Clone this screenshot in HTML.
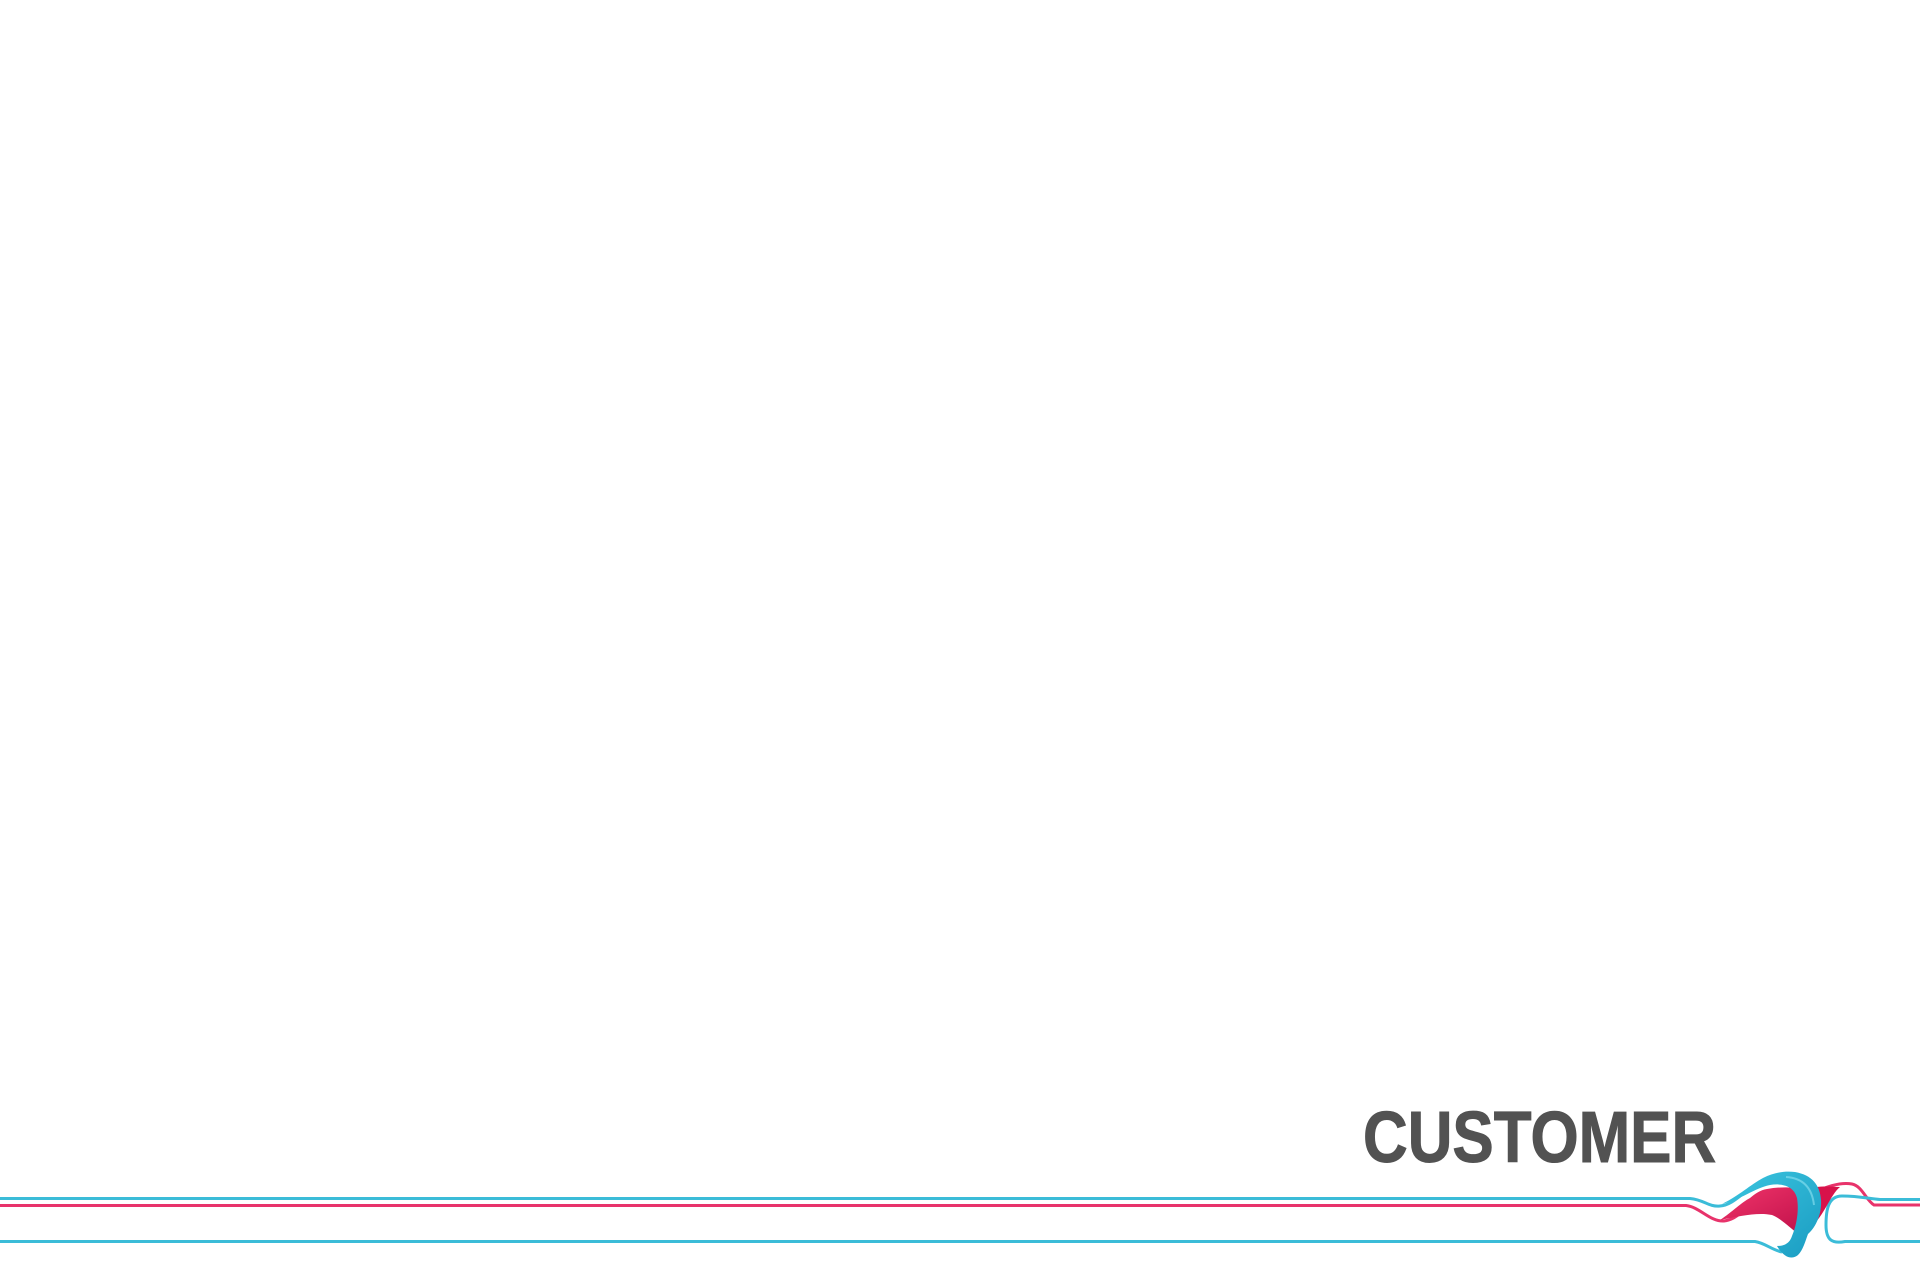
<!DOCTYPE html>
<html><head><meta charset="utf-8"><style>
html,body{margin:0;padding:0;background:#fff;width:1920px;height:1280px;overflow:hidden;position:relative}
.t{position:absolute;left:1363px;top:1098px;font-family:"Liberation Sans",sans-serif;font-weight:bold;font-size:72px;line-height:80px;color:#525252;transform:scaleX(0.86);transform-origin:0 0;white-space:nowrap;-webkit-text-stroke:1px #525252}
svg{position:absolute;left:0;top:0}
</style></head><body>
<div class="t">CUSTOMER</div>
<svg width="1920" height="1280" viewBox="0 0 1920 1280">
<defs>
<linearGradient id="cy" x1="0" y1="0" x2="1" y2="1"><stop offset="0" stop-color="#3cc6e0"/><stop offset="1" stop-color="#1a9cc2"/></linearGradient>
<linearGradient id="pk" x1="0" y1="0" x2="1" y2="1"><stop offset="0" stop-color="#f0356a"/><stop offset="1" stop-color="#c0104a"/></linearGradient>
</defs>
<g fill="none" stroke-width="3">
<path d="M0 1198.5 H1690 C1705 1200 1708 1207 1720 1206 C1735 1205 1745 1188 1765 1180" stroke="#3bbcd8"/>
<path d="M0 1205.5 H1686 C1700 1207 1710 1222 1724 1221 C1735 1220 1740 1212 1752 1206" stroke="#e8336b"/>
<path d="M0 1241.5 H1755 C1765 1243 1772 1250 1782 1252" stroke="#3bbcd8"/>
<path d="M1815 1192 C1828 1186 1842 1182 1852 1184 C1862 1186 1866 1200 1874 1205 H1920" stroke="#e8336b"/>
<path d="M1920 1199.5 H1880 C1870 1199 1860 1196 1842 1196 C1828 1196 1826 1210 1826 1225 C1826 1240 1832 1244 1845 1241.5 H1920" stroke="#3bbcd8"/>
</g>
<path d="M1720 1220 C1732 1212 1742 1202 1750 1198 C1755 1194 1760 1190 1767 1189 C1785 1186 1800 1187 1808 1192 C1810 1210 1804 1226 1797 1233 C1788 1226 1780 1218 1772 1215 C1758 1212 1740 1216 1720 1220 Z" fill="url(#pk)"/>
<path d="M1805 1190 C1815 1186 1825 1186 1840 1187 C1830 1195 1825 1215 1810 1228 C1810 1212 1810 1200 1805 1190 Z" fill="#d8124a"/>
<path d="M1722 1204 C1740 1195 1750 1185 1763 1178 C1775 1172 1785 1171 1795 1172 C1812 1175 1820 1185 1821 1200 C1822 1215 1815 1228 1808 1234 C1805 1242 1803 1250 1798 1255 C1792 1260 1784 1258 1777 1246 C1786 1246 1790 1242 1792 1236 C1797 1224 1799 1210 1797 1198 C1794 1186 1782 1183 1770 1185 C1755 1188 1740 1200 1722 1204 Z" fill="url(#cy)"/>
<path d="M1786 1177 C1803 1178 1812 1188 1814 1205" stroke="#8fe2f2" stroke-width="2" fill="none" opacity=".6"/>
</svg>
</body></html>
